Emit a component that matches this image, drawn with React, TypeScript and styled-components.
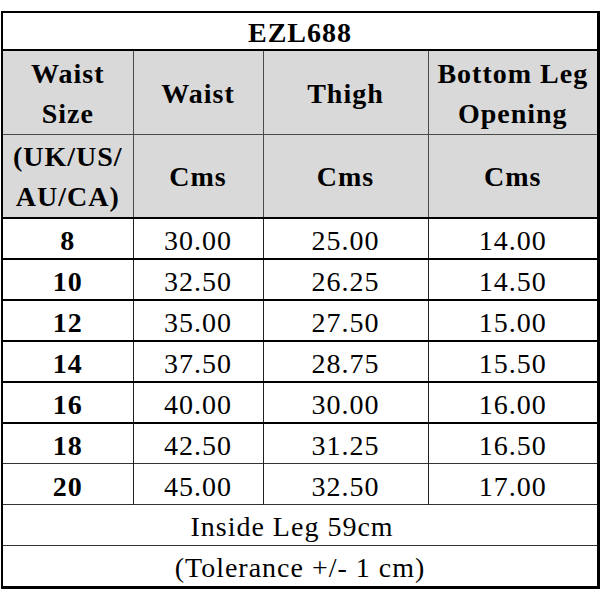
import styled, { createGlobalStyle } from 'styled-components';

const GlobalStyle = createGlobalStyle`
  html, body {
    margin: 0;
    padding: 0;
    background: #fff;
  }
  body {
    font-family: "Liberation Serif", "Times New Roman", serif;
    color: #000;
  }
`;

const Page = styled.div`
  padding: 11px 1px 0 1px;
`;

const Frame = styled.div`
  width: 594px;
  border-top: 2px solid #000;
  border-left: 2px solid #000;
  border-right: 3px solid #000;
  border-bottom: 3px solid #000;
`;

const Table = styled.table`
  width: 100%;
  border-collapse: collapse;
  table-layout: fixed;
  font-family: "Liberation Serif", "Times New Roman", serif;
  font-size: 28px;
  color: #000;

  tr:first-child > * {
    border-top: none;
  }
  tr > *:first-child {
    border-left: none;
  }
`;

const TitleCell = styled.th`
  height: 32px;
  padding: 4px 0 0;
  font-weight: bold;
  font-size: 28px;
  letter-spacing: 1px;
  text-align: center;
  vertical-align: middle;
  line-height: 1;
`;

const HeadCell = styled.th<{ $tall: number; $thick?: boolean }>`
  height: ${p => p.$tall}px;
  padding: 2px 0 0;
  background: #d9d9d9;
  font-weight: bold;
  line-height: 40px;
  letter-spacing: 1px;
  text-align: center;
  vertical-align: middle;
  border-top: ${p => (p.$thick ? '2px solid #000' : '1px solid #4a4a4a')};
  border-left: 1px solid #4a4a4a;
`;

const SizeCell = styled.td<{ $thick: boolean }>`
  height: ${p => (p.$thick ? 34 : 35)}px;
  padding: 5px 0 0;
  font-weight: bold;
  text-align: center;
  vertical-align: middle;
  line-height: 1;
  letter-spacing: 1px;
  border-top: ${p => (p.$thick ? '2px solid #000' : '1px solid #333')};
`;

const ValueCell = styled.td<{ $thick: boolean }>`
  height: ${p => (p.$thick ? 34 : 35)}px;
  padding: 5px 0 0;
  text-align: center;
  vertical-align: middle;
  line-height: 1;
  letter-spacing: 1px;
  border-top: ${p => (p.$thick ? '2px solid #000' : '1px solid #333')};
  border-left: 1px solid #222;
`;

const FootCell = styled.td<{ $shift?: number }>`
  height: 36px;
  padding: 4px ${p => p.$shift ?? 0}px 0 0;
  text-align: center;
  vertical-align: middle;
  line-height: 1;
  letter-spacing: 1px;
  border-top: 1px solid #333;
`;

const sizes = [
  { size: '8', waist: '30.00', thigh: '25.00', leg: '14.00' },
  { size: '10', waist: '32.50', thigh: '26.25', leg: '14.50' },
  { size: '12', waist: '35.00', thigh: '27.50', leg: '15.00' },
  { size: '14', waist: '37.50', thigh: '28.75', leg: '15.50' },
  { size: '16', waist: '40.00', thigh: '30.00', leg: '16.00' },
  { size: '18', waist: '42.50', thigh: '31.25', leg: '16.50' },
  { size: '20', waist: '45.00', thigh: '32.50', leg: '17.00' },
];

const App = () => {
  return (
    <Page>
      <GlobalStyle />
      <Frame>
        <Table>
          <colgroup>
            <col style={{ width: 130 }} />
            <col style={{ width: 130 }} />
            <col style={{ width: 165 }} />
            <col style={{ width: 169 }} />
          </colgroup>
          <tbody>
            <tr>
              <TitleCell colSpan={4}>EZL688</TitleCell>
            </tr>
            <tr>
              <HeadCell $tall={81} $thick>
                Waist
                <br />
                Size
              </HeadCell>
              <HeadCell $tall={81} $thick>Waist</HeadCell>
              <HeadCell $tall={81} $thick>Thigh</HeadCell>
              <HeadCell $tall={81} $thick>
                Bottom Leg
                <br />
                Opening
              </HeadCell>
            </tr>
            <tr>
              <HeadCell $tall={79}>
                (UK/US/
                <br />
                AU/CA)
              </HeadCell>
              <HeadCell $tall={79}>Cms</HeadCell>
              <HeadCell $tall={79}>Cms</HeadCell>
              <HeadCell $tall={79}>Cms</HeadCell>
            </tr>
            {sizes.map((row, i) => {
              const thick = i < 6;
              return (
                <tr key={row.size}>
                  <SizeCell $thick={thick}>{row.size}</SizeCell>
                  <ValueCell $thick={thick}>{row.waist}</ValueCell>
                  <ValueCell $thick={thick}>{row.thigh}</ValueCell>
                  <ValueCell $thick={thick}>{row.leg}</ValueCell>
                </tr>
              );
            })}
            <tr>
              <FootCell colSpan={4} $shift={16}>Inside Leg 59cm</FootCell>
            </tr>
            <tr>
              <FootCell colSpan={4}>(Tolerance +/- 1 cm)</FootCell>
            </tr>
          </tbody>
        </Table>
      </Frame>
    </Page>
  );
};

export default App;
